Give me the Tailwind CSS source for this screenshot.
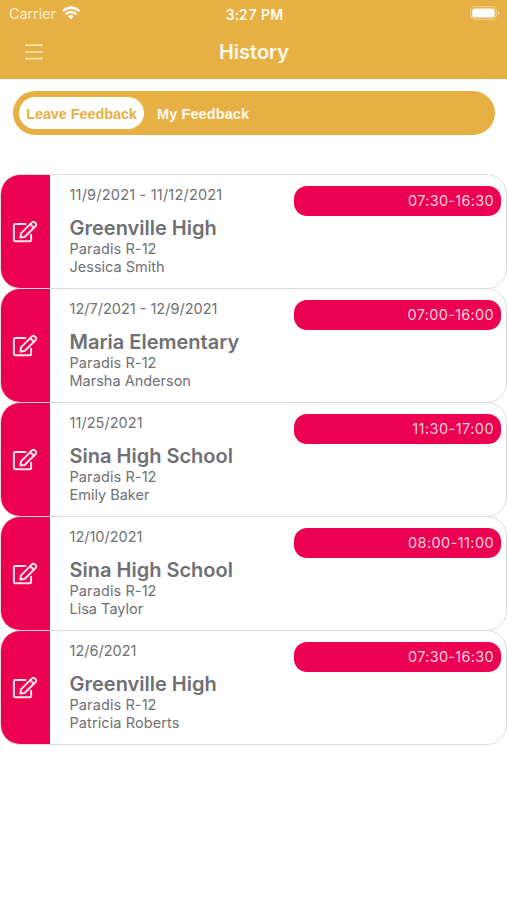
<!DOCTYPE html>
<html lang="en">
<head>
<meta charset="utf-8">
<title>History</title>
<script src="https://cdn.jsdelivr.net/npm/@tailwindcss/browser@4"></script>
</head>
<body class="bg-white w-[507px] h-[900px] overflow-hidden font-['Inter',sans-serif] text-[#6f7073]">
<svg class="hidden">
  <symbol id="edit" viewBox="0 0 26 24">
    <g fill="none" stroke="#ffe3ec" stroke-width="2" stroke-linejoin="round" stroke-linecap="round">
      <path d="M13.5 4H3.2Q1.9 4 1.9 5.3V19.9Q1.9 21.2 3.2 21.2H17.8Q19.1 21.2 19.1 19.9V14.8"/>
      <path d="M9 13.4L20 2.4Q21.4 1 22.8 2.4L23.6 3.2Q25 4.6 23.6 6L12.6 17L8.4 17.6Z"/>
      <path d="M18.2 4.2L21.8 7.8"/>
    </g>
  </symbol>
</svg>
<header class="h-[79px] bg-[#e6b045] text-[#fffaf0]">
  <div class="h-[28px] grid grid-cols-3 items-center pl-[9px] pr-[7px]">
    <div class="flex items-center gap-[6px]">
      <span class="text-[14.5px] tracking-[-0.1px] text-[#fff0cf]">Carrier</span>
      <svg class="w-[18px] h-[14px] -mt-[2px]" viewBox="0 0 19 14" fill="none" stroke="#fffdf8" stroke-width="2.7">
        <path d="M.9 5Q9.5-2.4 18.1 5"/><path d="M3.9 8.3Q9.5 3.5 15.1 8.3"/><path d="M9.5 13.6L6.4 10.4Q9.5 7.8 12.6 10.4Z" fill="#fffdf8" stroke="none"/>
      </svg>
    </div>
    <span class="text-center text-[14px] font-semibold whitespace-nowrap tabular-nums tracking-[0.1px]">3:27 PM</span>
    <svg class="justify-self-end w-[30px] h-[14px] -mt-[2px]" viewBox="0 0 30 14">
      <rect x=".7" y=".7" width="25.6" height="12.6" rx="4" fill="none" stroke="#f1cf8c" stroke-width="1.2"/>
      <rect x="2.3" y="2.5" width="22.4" height="9" rx="2.2" fill="#fff"/>
      <path d="M27.8 4.8Q29.6 5.4 29.6 7T27.8 9.2Z" fill="#f1cf8c"/>
    </svg>
  </div>
  <div class="h-[48px] grid grid-cols-3 items-center pl-[25px] pr-[24px]">
    <svg class="w-[18px] h-[16px]" viewBox="0 0 18 16" stroke="#fbe3ac" stroke-width="1.7"><path d="M0 1.2H18M0 8H18M0 14.7H18"/></svg>
    <h1 class="text-center text-[20px] font-semibold">History</h1>
  </div>
</header>
<nav class="mt-[12px] ml-[13px] w-[482px] h-[44px] rounded-full bg-[#e6b045] flex items-center pl-[6px] font-['Liberation_Sans',sans-serif] font-bold text-[14.5px]">
  <span class="w-[125px] h-[32px] rounded-[16px] bg-white text-[#e6b045] flex items-center justify-center whitespace-nowrap"><span class="tracking-[-0.1px] pt-[3px]">Leave Feedback</span></span>
  <span class="ml-[13px] pt-[3px] text-[#fffaf0] whitespace-nowrap tracking-[0.1px]">My Feedback</span>
</nav>
<main class="mt-[39px]">
  <article class="h-[115px] -mb-px rounded-[20px] border-[1.5px] border-[#dadada] overflow-hidden flex">
    <div class="w-[49px] bg-[#ec0052] flex items-center pl-[11px]"><svg class="w-[26px] h-[24px]"><use href="#edit"/></svg></div>
    <div class="pl-[19.5px] pt-[10px] w-[244px] whitespace-nowrap text-[14.5px] leading-[17.5px]">
      <p class="leading-[20px] tracking-[0.2px]">11/9/2021 - 11/12/2021</p>
      <h2 class="mt-[10px] -mb-px text-[20px] leading-[26px] font-semibold">Greenville High</h2>
      <p class="tracking-[0.1px]">Paradis R-12</p><p>Jessica Smith</p>
    </div>
    <div class="mt-[11px] w-[207px] h-[30px] rounded-[13px] bg-[#ec0052] text-[#ffd0df] text-[14.5px] tracking-[0.3px] flex items-center justify-end pr-[7px]">07:30-16:30</div>
  </article>
  <article class="h-[115px] -mb-px rounded-[20px] border-[1.5px] border-[#dadada] overflow-hidden flex">
    <div class="w-[49px] bg-[#ec0052] flex items-center pl-[11px]"><svg class="w-[26px] h-[24px]"><use href="#edit"/></svg></div>
    <div class="pl-[19.5px] pt-[10px] w-[244px] whitespace-nowrap text-[14.5px] leading-[17.5px]">
      <p class="leading-[20px]">12/7/2021 - 12/9/2021</p>
      <h2 class="mt-[10px] -mb-px text-[20px] leading-[26px] font-semibold">Maria Elementary</h2>
      <p class="tracking-[0.1px]">Paradis R-12</p><p>Marsha Anderson</p>
    </div>
    <div class="mt-[11px] w-[207px] h-[30px] rounded-[13px] bg-[#ec0052] text-[#ffd0df] text-[14.5px] tracking-[0.3px] flex items-center justify-end pr-[7px]">07:00-16:00</div>
  </article>
  <article class="h-[115px] -mb-px rounded-[20px] border-[1.5px] border-[#dadada] overflow-hidden flex">
    <div class="w-[49px] bg-[#ec0052] flex items-center pl-[11px]"><svg class="w-[26px] h-[24px]"><use href="#edit"/></svg></div>
    <div class="pl-[19.5px] pt-[10px] w-[244px] whitespace-nowrap text-[14.5px] leading-[17.5px]">
      <p class="leading-[20px] tracking-[0.05px]">11/25/2021</p>
      <h2 class="mt-[10px] -mb-px text-[20px] leading-[26px] font-semibold">Sina High School</h2>
      <p class="tracking-[0.1px]">Paradis R-12</p><p>Emily Baker</p>
    </div>
    <div class="mt-[11px] w-[207px] h-[30px] rounded-[13px] bg-[#ec0052] text-[#ffd0df] text-[14.5px] tracking-[0.45px] flex items-center justify-end pr-[7px]">11:30-17:00</div>
  </article>
  <article class="h-[115px] -mb-px rounded-[20px] border-[1.5px] border-[#dadada] overflow-hidden flex">
    <div class="w-[49px] bg-[#ec0052] flex items-center pl-[11px]"><svg class="w-[26px] h-[24px]"><use href="#edit"/></svg></div>
    <div class="pl-[19.5px] pt-[10px] w-[244px] whitespace-nowrap text-[14.5px] leading-[17.5px]">
      <p class="leading-[20px]">12/10/2021</p>
      <h2 class="mt-[10px] -mb-px text-[20px] leading-[26px] font-semibold">Sina High School</h2>
      <p class="tracking-[0.1px]">Paradis R-12</p><p>Lisa Taylor</p>
    </div>
    <div class="mt-[11px] w-[207px] h-[30px] rounded-[13px] bg-[#ec0052] text-[#ffd0df] text-[14.5px] tracking-[0.4px] flex items-center justify-end pr-[7px]">08:00-11:00</div>
  </article>
  <article class="h-[115px] -mb-px rounded-[20px] border-[1.5px] border-[#dadada] overflow-hidden flex">
    <div class="w-[49px] bg-[#ec0052] flex items-center pl-[11px]"><svg class="w-[26px] h-[24px]"><use href="#edit"/></svg></div>
    <div class="pl-[19.5px] pt-[10px] w-[244px] whitespace-nowrap text-[14.5px] leading-[17.5px]">
      <p class="leading-[20px]">12/6/2021</p>
      <h2 class="mt-[10px] -mb-px text-[20px] leading-[26px] font-semibold">Greenville High</h2>
      <p class="tracking-[0.1px]">Paradis R-12</p><p class="tracking-[0.1px]">Patricia Roberts</p>
    </div>
    <div class="mt-[11px] w-[207px] h-[30px] rounded-[13px] bg-[#ec0052] text-[#ffd0df] text-[14.5px] tracking-[0.3px] flex items-center justify-end pr-[7px]">07:30-16:30</div>
  </article>
</main>
</body>
</html>
